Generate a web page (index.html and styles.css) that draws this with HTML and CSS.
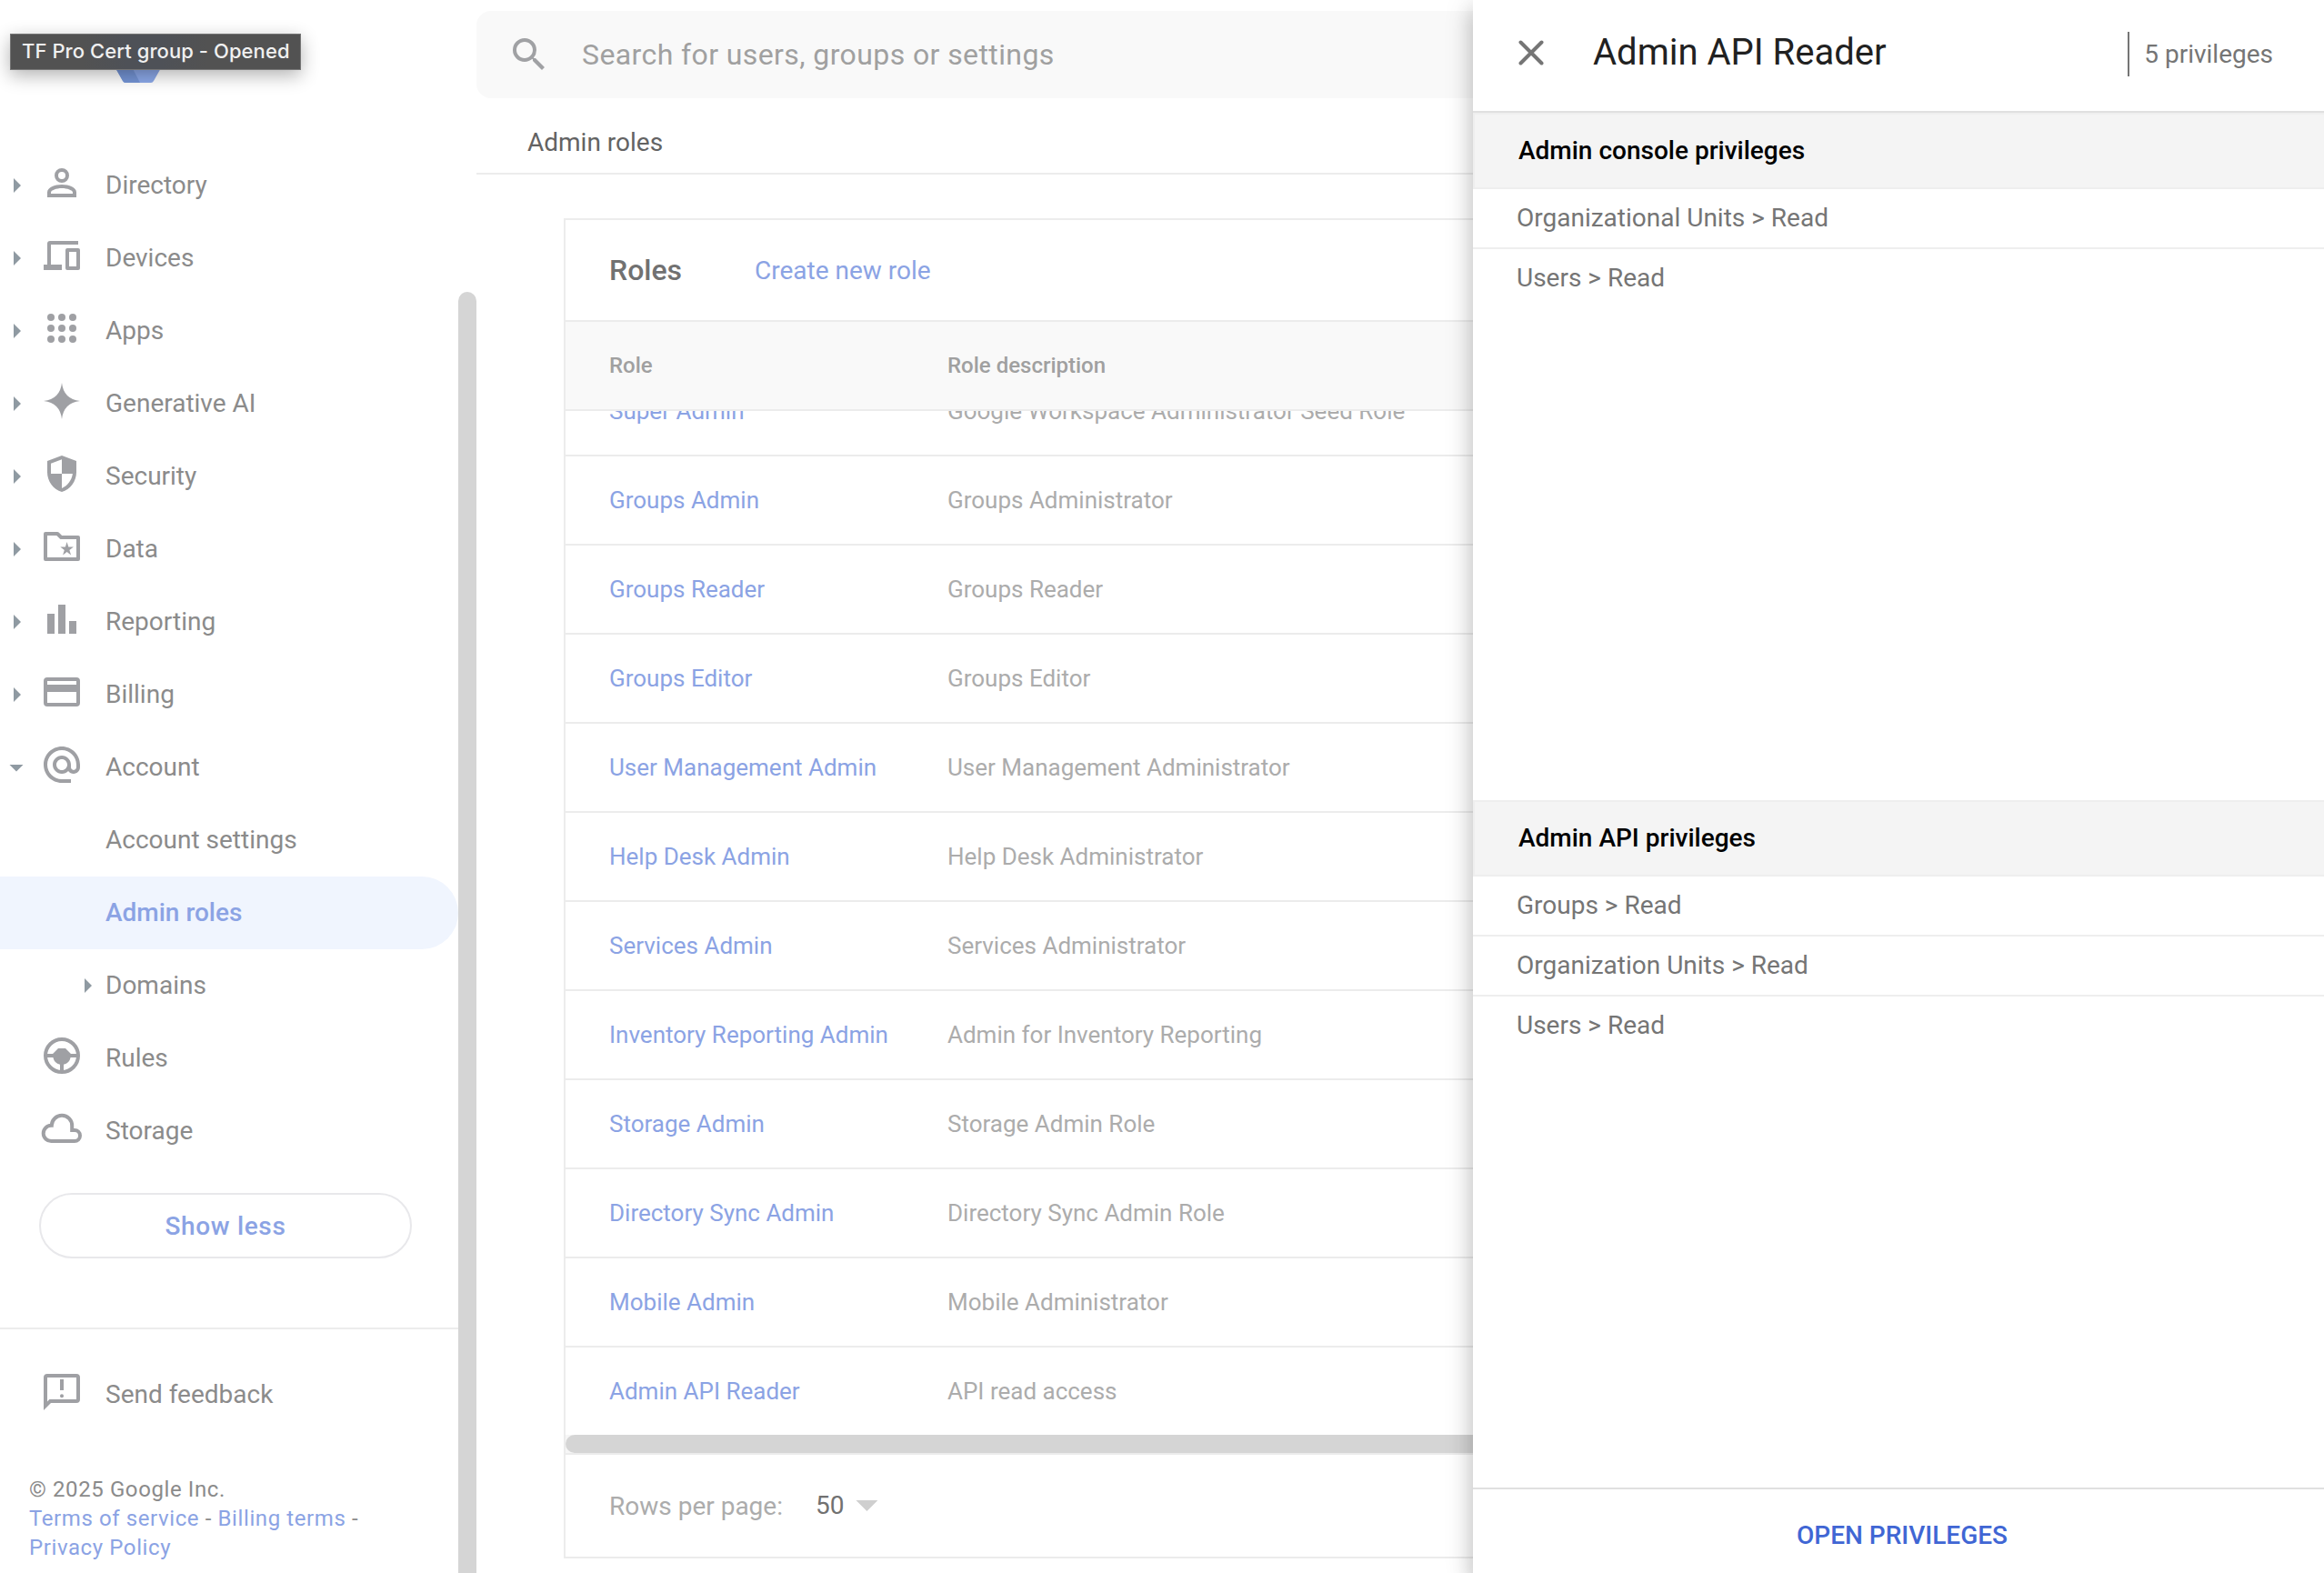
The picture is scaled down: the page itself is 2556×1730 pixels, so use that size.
FILE: index.html
```html
<!DOCTYPE html>
<html lang="en">
<head>
<meta charset="utf-8">
<title>Admin roles</title>
<link rel="stylesheet" href="styles.css">
</head>
<body>
<div class="app">
  <aside class="sidebar">
    <div class="brand">
      <svg class="brand-logo" viewBox="0 0 64 54" aria-hidden="true">
        <path fill="#8ca9ea" d="M18 54a4 4 0 0 1-3-2L2 29a4 4 0 0 1 0-4L15 2a4 4 0 0 1 3-2h28a4 4 0 0 1 3 2l13 23a4 4 0 0 1 0 4L49 52a4 4 0 0 1-3 2z"/>
        <path fill="#7595d6" d="M18 54a4 4 0 0 1-3-2L2 29l18-2 14 27z"/>
      </svg>
      <div class="tooltip">TF Pro Cert group - Opened</div>
    </div>
    <nav class="nav">
      <a class="nav-row"><span class="arrow"></span><svg class="icon" viewBox="0 0 24 24"><circle cx="12" cy="8" r="3" fill="none" stroke="currentColor" stroke-width="2"/><path fill-rule="evenodd" d="M4 20v-2.800c0-2.600 4-4.200 8-4.200s8 1.600 8 4.200V20zm2-2h12v-.8c0-1-3-2.200-6-2.200s-6 1.200-6 2.200z"/></svg><span>Directory</span></a>
      <a class="nav-row"><span class="arrow"></span><svg class="icon" viewBox="0 0 24 24"><path fill-rule="evenodd" d="M5.500 4H21v2H6v11h6v3H2v-3h2V5.500A1.500 1.500 0 0 1 5.500 4zM15 8h6a1 1 0 0 1 1 1v10a1 1 0 0 1-1 1h-6a1 1 0 0 1-1-1V9a1 1 0 0 1 1-1zm1 2v8h4v-8z"/></svg><span>Devices</span></a>
      <a class="nav-row"><span class="arrow"></span><svg class="icon" viewBox="0 0 24 24"><circle cx="6" cy="6" r="2"/><circle cx="12" cy="6" r="2"/><circle cx="18" cy="6" r="2"/><circle cx="6" cy="12" r="2"/><circle cx="12" cy="12" r="2"/><circle cx="18" cy="12" r="2"/><circle cx="6" cy="18" r="2"/><circle cx="12" cy="18" r="2"/><circle cx="18" cy="18" r="2"/></svg><span>Apps</span></a>
      <a class="nav-row"><span class="arrow"></span><svg class="icon" viewBox="0 0 24 24"><path d="M12 2Q13 11 22 12Q13 13 12 22Q11 13 2 12Q11 11 12 2z"/></svg><span>Generative AI</span></a>
      <a class="nav-row"><span class="arrow"></span><svg class="icon" viewBox="0 0 24 24"><path fill-rule="evenodd" d="M12 2L4 5v6.100c0 5.050 3.410 9.760 8 10.900 4.590-1.140 8-5.850 8-10.900V5zM12 4.150V12H6V6.400zM12 12h5.950c-.5 3.600-2.900 6.800-5.950 7.950z"/></svg><span>Security</span></a>
      <a class="nav-row"><span class="arrow"></span><svg class="icon" viewBox="0 0 24 24"><path fill="none" stroke="currentColor" stroke-width="2" stroke-linejoin="round" d="M3 5h6.600l2 2H21v12H3z"/><path d="M14.800 9.500l.85 2.750h2.800l-2.250 1.700.85 2.750-2.250-1.700-2.250 1.700.85-2.750-2.250-1.700h2.800z"/></svg><span>Data</span></a>
      <a class="nav-row"><span class="arrow"></span><svg class="icon" viewBox="0 0 24 24"><path d="M4 9h4v11H4zM10 4h4v16h-4zM16 13h4v7h-4z"/></svg><span>Reporting</span></a>
      <a class="nav-row"><span class="arrow"></span><svg class="icon" viewBox="0 0 24 24"><path fill-rule="evenodd" d="M4 4h16a2 2 0 0 1 2 2v12a2 2 0 0 1-2 2H4a2 2 0 0 1-2-2V6a2 2 0 0 1 2-2zm0 2v2h16V6zm0 6v6h16v-6z"/></svg><span>Billing</span></a>
      <a class="nav-row"><span class="arrow arrow-open"></span><svg class="icon" viewBox="0 0 24 24"><path d="M12 1.950c-5.520 0-10 4.480-10 10s4.480 10 10 10h5v-2h-5c-4.340 0-8-3.660-8-8s3.660-8 8-8 8 3.660 8 8v1.430c0 .79-.71 1.570-1.500 1.570s-1.500-.78-1.500-1.570v-1.430c0-2.760-2.240-5-5-5s-5 2.240-5 5 2.240 5 5 5c1.380 0 2.640-.56 3.540-1.470.65.89 1.770 1.470 2.960 1.470 1.970 0 3.500-1.600 3.500-3.570v-1.430c0-5.520-4.480-10-10-10zm0 13c-1.660 0-3-1.340-3-3s1.340-3 3-3 3 1.340 3 3-1.340 3-3 3z"/></svg><span>Account</span></a>
      <a class="nav-row nav-child">Account settings</a>
      <a class="nav-row nav-child nav-active">Admin roles</a>
      <a class="nav-row nav-group"><span class="arrow"></span><span>Domains</span></a>
      <a class="nav-row nav-leaf"><svg class="icon" viewBox="0 0 24 24"><circle cx="12" cy="12" r="9" fill="none" stroke="currentColor" stroke-width="2"/><path d="M10 8h4l3 3h4v2h-4.200A5 5 0 0 1 13 16.900V21h-2v-4.100A5 5 0 0 1 7.200 13H3v-2h4z"/></svg><span>Rules</span></a>
      <a class="nav-row nav-leaf"><svg class="icon" viewBox="0 0 24 24"><path fill="none" stroke="currentColor" stroke-width="2" d="M6.300 19a4.300 4.300 0 0 1-.3-8.600h.4A5.600 5.600 0 0 1 17.600 10.600V13h1.400a3 3 0 0 1 0 6z"/></svg><span>Storage</span></a>
    </nav>
    <button class="show-less">Show less</button>
    <div class="feedback">
      <a class="nav-row nav-leaf"><svg class="icon" viewBox="0 0 24 24"><path fill-rule="evenodd" d="M4 2h16a2 2 0 0 1 2 2v12a2 2 0 0 1-2 2H6l-4 4V4a2 2 0 0 1 2-2zm0 2v13.200L5.200 16H20V4zM11 5h2v6h-2z"/><circle cx="12" cy="14.100" r="1"/></svg><span>Send feedback</span></a>
    </div>
    <footer class="legal">© 2025 Google Inc.<br><a>Terms of service</a> - <a>Billing terms</a> -<br><a>Privacy Policy</a></footer>
  </aside>
  <div class="side-scroll"><div class="side-thumb"></div></div>
  <main class="main">
    <div class="search">
      <svg class="search-icon" viewBox="0 0 24 24"><path d="M15.500 14h-.79l-.28-.27A6.471 6.471 0 0 0 16 9.500 6.500 6.500 0 1 0 9.500 16c1.610 0 3.090-.59 4.230-1.570l.27.28v.79l5 4.990L20.490 19l-4.990-5zm-6 0C7.010 14 5 11.990 5 9.500S7.010 5 9.500 5 14 7.010 14 9.500 11.990 14 9.500 14z"/></svg>
      <span>Search for users, groups or settings</span>
    </div>
    <div class="crumbs">Admin roles</div>
    <section class="card">
      <header class="card-head"><h2>Roles</h2><a>Create new role</a></header>
      <div class="row row-head"><span>Role</span><span>Role description</span></div>
      <div class="rows">
        <div class="row"><a>Super Admin</a><span>Google Workspace Administrator Seed Role</span></div>
        <div class="row"><a>Groups Admin</a><span>Groups Administrator</span></div>
        <div class="row"><a>Groups Reader</a><span>Groups Reader</span></div>
        <div class="row"><a>Groups Editor</a><span>Groups Editor</span></div>
        <div class="row"><a>User Management Admin</a><span>User Management Administrator</span></div>
        <div class="row"><a>Help Desk Admin</a><span>Help Desk Administrator</span></div>
        <div class="row"><a>Services Admin</a><span>Services Administrator</span></div>
        <div class="row"><a>Inventory Reporting Admin</a><span>Admin for Inventory Reporting</span></div>
        <div class="row"><a>Storage Admin</a><span>Storage Admin Role</span></div>
        <div class="row"><a>Directory Sync Admin</a><span>Directory Sync Admin Role</span></div>
        <div class="row"><a>Mobile Admin</a><span>Mobile Administrator</span></div>
        <div class="row"><a>Admin API Reader</a><span>API read access</span></div>
      </div>
      <div class="h-scroll"><div class="h-thumb"></div></div>
      <div class="pager"><span>Rows per page:</span><span class="pager-value">50</span><span class="pager-arrow"></span></div>
    </section>
  </main>
  <aside class="panel">
    <header class="panel-head">
      <svg class="close" viewBox="0 0 28 28"><path fill="none" stroke="#757575" stroke-width="4" stroke-linecap="round" d="M2.500 2.500l23 23M25.500 2.500l-23 23"/></svg>
      <h1>Admin API Reader</h1>
      <span class="count">5 privileges</span>
    </header>
    <section class="group">
      <h3>Admin console privileges</h3>
      <ul><li>Organizational Units &gt; Read</li><li>Users &gt; Read</li></ul>
    </section>
    <section class="group">
      <h3>Admin API privileges</h3>
      <ul><li>Groups &gt; Read</li><li>Organization Units &gt; Read</li><li>Users &gt; Read</li></ul>
    </section>
    <footer class="panel-foot"><a>OPEN PRIVILEGES</a></footer>
  </aside>
</div>
</body>
</html>
```
FILE: styles.css
```css
* { box-sizing: border-box; }

body {
  margin: 0;
  background: #fff;
  font-family: Roboto, "Liberation Sans", sans-serif;
  font-size: 28px;
  color: #8b8b8b;
}

h1, h2, h3, ul { margin: 0; padding: 0; }
ul { list-style: none; }

.app {
  position: relative;
  display: flex;
  height: 1730px;
  overflow: hidden;
}

/* Navigation */
.sidebar {
  flex: 0 0 504px;
  display: flex;
  flex-direction: column;
}

.brand {
  position: relative;
  flex: 0 0 164px;
  padding: 37px 0 0 120px;
}

.brand-logo { display: block; width: 64px; height: 54px; }

.tooltip {
  position: absolute;
  left: 11px;
  top: 37px;
  width: 320px;
  height: 40px;
  padding-left: 12px;
  border: 1px solid #747474;
  background: linear-gradient(90deg, #525252 25%, #4e5157 40%, #4e5157 52%, #525252 68%);
  box-shadow: 0 6px 20px rgba(0, 0, 0, .3);
  color: #f0f0f0;
  font: 500 22px/36px Inter, "Liberation Sans", sans-serif;
  letter-spacing: .07px;
  white-space: nowrap;
}

.nav-row {
  display: flex;
  align-items: center;
  height: 80px;
  line-height: 32px;
  white-space: nowrap;
}

.arrow {
  width: 8px;
  height: 16px;
  margin: 0 21px 0 15px;
  background: #8f9aa2;
  clip-path: polygon(0 0, 100% 50%, 0 100%);
}

.arrow-open {
  width: 16px;
  height: 8px;
  margin: 1px 18px 0 10px;
  clip-path: polygon(0 0, 100% 0, 50% 100%);
}

.icon {
  flex: none;
  width: 48px;
  height: 48px;
  margin: 0 24px 6px 0;
  fill: #9fa0a4;
  color: #9fa0a4;
}

.nav-leaf { padding-left: 44px; }
.nav-child { padding-left: 116px; }
.nav-group .arrow { margin: 0 15px 0 93px; }

.nav-active {
  border-radius: 0 40px 40px 0;
  background: #f0f5fe;
  color: #8ba3e4;
  font-weight: 500;
}

.show-less {
  height: 72px;
  margin: 28px 51px 0 43px;
  padding: 2px 0 0;
  border: 2px solid #e8e8eb;
  border-radius: 36px;
  background: none;
  color: #8ba3e4;
  font: 500 28px/32px Roboto, sans-serif;
  letter-spacing: .65px;
}

.feedback {
  margin-top: 76px;
  padding-top: 32px;
  border-top: 2px solid #ececec;
}

.legal {
  margin: 48px 0 0 32px;
  font-size: 24px;
  line-height: 32px;
  letter-spacing: .6px;
  white-space: nowrap;
}

.legal a, .card a { color: #8ba3e4; }

.side-scroll {
  flex: 0 0 20px;
  display: flex;
  padding-top: 321px;
}

.side-thumb {
  flex: 1;
  border-radius: 10px 10px 0 0;
  background: #d5d5d5;
}

/* Main column */
.main { flex: 1; padding-top: 12px; }

.search {
  display: flex;
  align-items: center;
  gap: 34px;
  height: 96px;
  padding-left: 34px;
  border-radius: 16px 0 0 16px;
  background: #f9f9f9;
  color: #a0a0a0;
  font-size: 32px;
  letter-spacing: .4px;
}

.search-icon { width: 48px; height: 48px; fill: #a0a1a4; }

.crumbs {
  height: 84px;
  padding: 32px 0 0 56px;
  border-bottom: 2px solid #ececec;
  color: #636363;
  line-height: 33px;
}

.card {
  margin: 48px 0 0 96px;
  border: 2px solid #ececec;
  border-right: 0;
}

.card-head {
  display: flex;
  align-items: center;
  gap: 80px;
  height: 112px;
  padding-left: 48px;
  border-bottom: 2px solid #ececec;
}

.card-head h2 { color: #717171; font-size: 32px; font-weight: 500; }

.row {
  display: grid;
  grid-template-columns: 372px 1fr;
  align-items: center;
  height: 98px;
  padding-left: 48px;
  border-bottom: 2px solid #ececec;
  color: #acacac;
  font-size: 26px;
}

.row-head {
  background: #f9f9f9;
  color: #a0a0a0;
  font-size: 24px;
  font-weight: 500;
}

.rows {
  display: flex;
  flex-direction: column;
  justify-content: flex-end;
  height: 1126px;
  overflow: hidden;
}

.rows .row { flex: none; }
.rows .row:last-child { height: 96px; border-bottom: 0; }

.h-scroll {
  height: 22px;
  border-bottom: 2px solid #ececec;
  background: #f6f6f6;
}

.h-thumb {
  height: 20px;
  border-radius: 10px 0 0 10px;
  background: #d5d5d5;
}

.pager {
  display: flex;
  align-items: center;
  height: 112px;
  padding-left: 48px;
  color: #acacac;
}

.pager-value { margin: 0 13px 2px 36px; color: #717171; }

.pager-arrow {
  width: 24px;
  height: 12px;
  background: #cfcfcf;
  clip-path: polygon(0 0, 100% 0, 50% 100%);
}

/* Slide-over panel */
.panel {
  position: absolute;
  top: 0;
  right: 0;
  bottom: 0;
  width: 936px;
  display: flex;
  flex-direction: column;
  background: #fff;
  box-shadow: 0 16px 20px 2px rgba(0, 0, 0, .14), 0 6px 28px 4px rgba(0, 0, 0, .12);
  color: #757575;
}

.panel-head {
  flex: none;
  display: flex;
  align-items: center;
  height: 124px;
  padding: 0 56px 8px 50px;
  border-bottom: 2px solid #e0e0e0;
}

.close { width: 28px; height: 28px; margin-top: 2px; }

.panel-head h1 {
  flex: 1;
  margin-left: 54px;
  color: #212121;
  font-size: 40px;
  font-weight: 400;
}

.count {
  height: 49px;
  margin-top: 4px;
  padding-left: 16px;
  border-left: 2px solid #757575;
  line-height: 49px;
}

.group { flex: 0 0 756px; }

.group h3 {
  height: 84px;
  padding-left: 48px;
  border: 2px solid #eee;
  border-right: 0;
  background: #f4f4f4;
  color: #000;
  font-size: 28px;
  font-weight: 500;
  line-height: 80px;
}

.group li {
  height: 66px;
  padding-left: 48px;
  border-bottom: 2px solid #eee;
  line-height: 64px;
}

.group li:last-child { border-bottom: 0; }

.panel-foot {
  flex: 1;
  border-top: 2px solid #e0e0e0;
  padding: 21px 0 0 8px;
  color: #4066d4;
  font-weight: 500;
  line-height: 60px;
  text-align: center;
}
```
